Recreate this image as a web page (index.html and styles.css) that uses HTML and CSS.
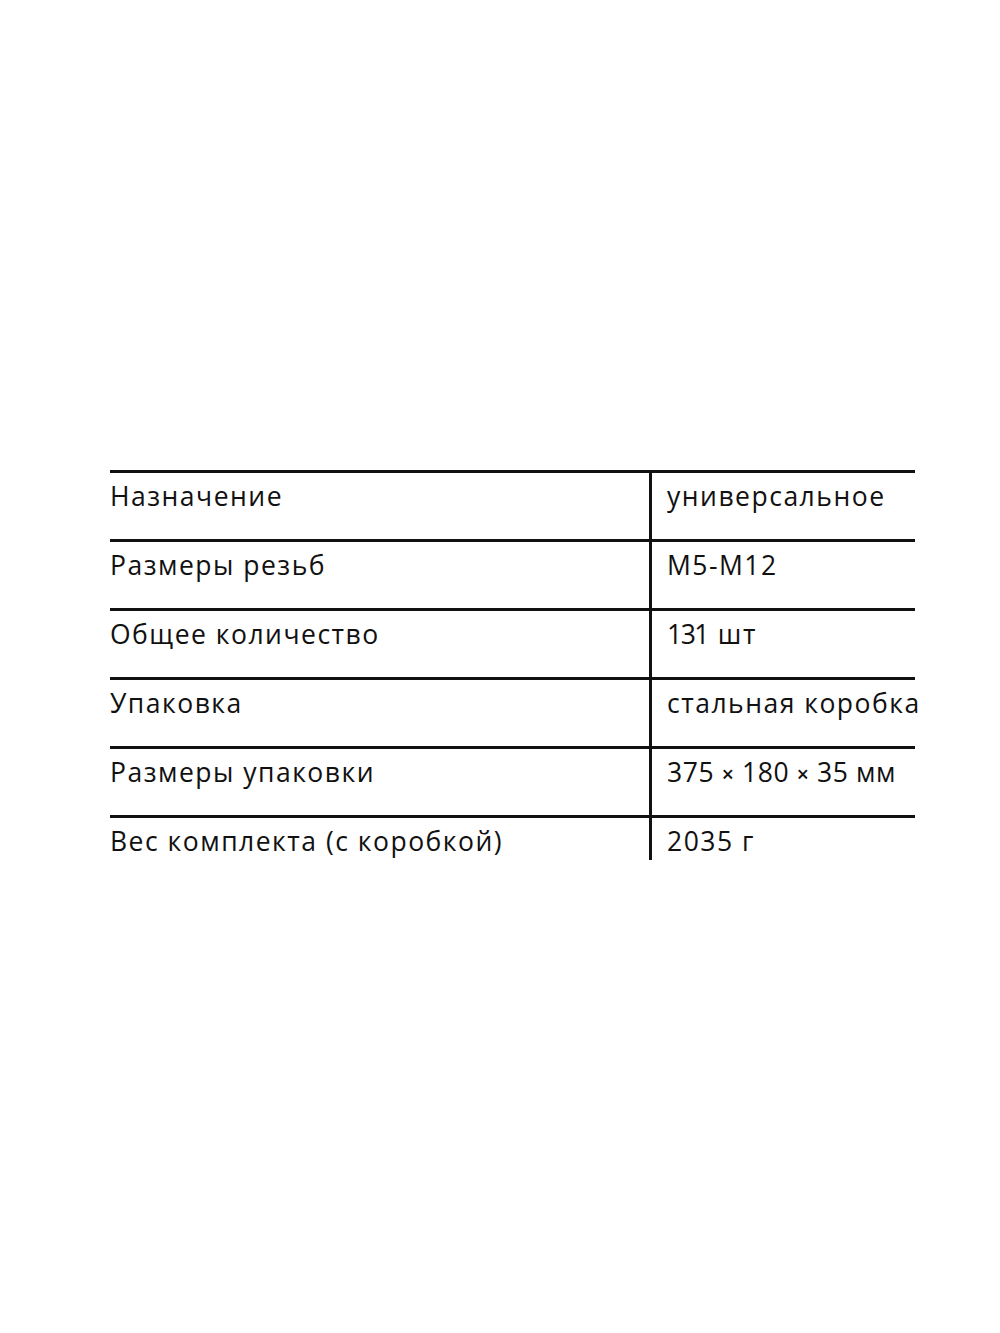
FILE: index.html
```html
<!DOCTYPE html>
<html lang="ru">
<head>
<meta charset="utf-8">
<link rel="stylesheet" href="styles.css">
</head>
<body>
<div class="spec">
  <div class="row"><div class="k">Назначение</div><div class="v">универсальное</div></div>
  <div class="row"><div class="k">Размеры резьб</div><div class="v">M5-M12</div></div>
  <div class="row"><div class="k">Общее количество</div><div class="v"><span class="tight">131</span> шт</div></div>
  <div class="row"><div class="k">Упаковка</div><div class="v">стальная коробка</div></div>
  <div class="row"><div class="k">Размеры упаковки</div><div class="v dims">375 <span class="times">×</span> 180 <span class="times">×</span> 35 мм</div></div>
  <div class="row last"><div class="k">Вес комплекта (с коробкой)</div><div class="v">2035 г</div></div>
</div>
</body>
</html>
```
FILE: styles.css
```css
html, body { margin: 0; padding: 0; background: #fff; }
body { width: 1000px; height: 1333px; font-family: "Open Sans", "DejaVu Sans", sans-serif; color: #111; }
.spec { margin: 470px 0 0 110px; width: 805px; }
.row { display: grid; grid-template-columns: 542px 1fr; border-top: 3px solid #111; height: 66px; }
.row.last { height: 42px; }
.k, .v { font-size: 26.5px; letter-spacing: 1.5px; line-height: 1; padding-top: 10px; }
.k { border-right: 3px solid #111; }
.v { padding-left: 15px; white-space: nowrap; }
.v.dims { letter-spacing: 0.6px; }
.times { font-size: 0.8em; font-weight: 600; }
.tight { letter-spacing: -1.5px; margin-right: 1.5px; }
```
